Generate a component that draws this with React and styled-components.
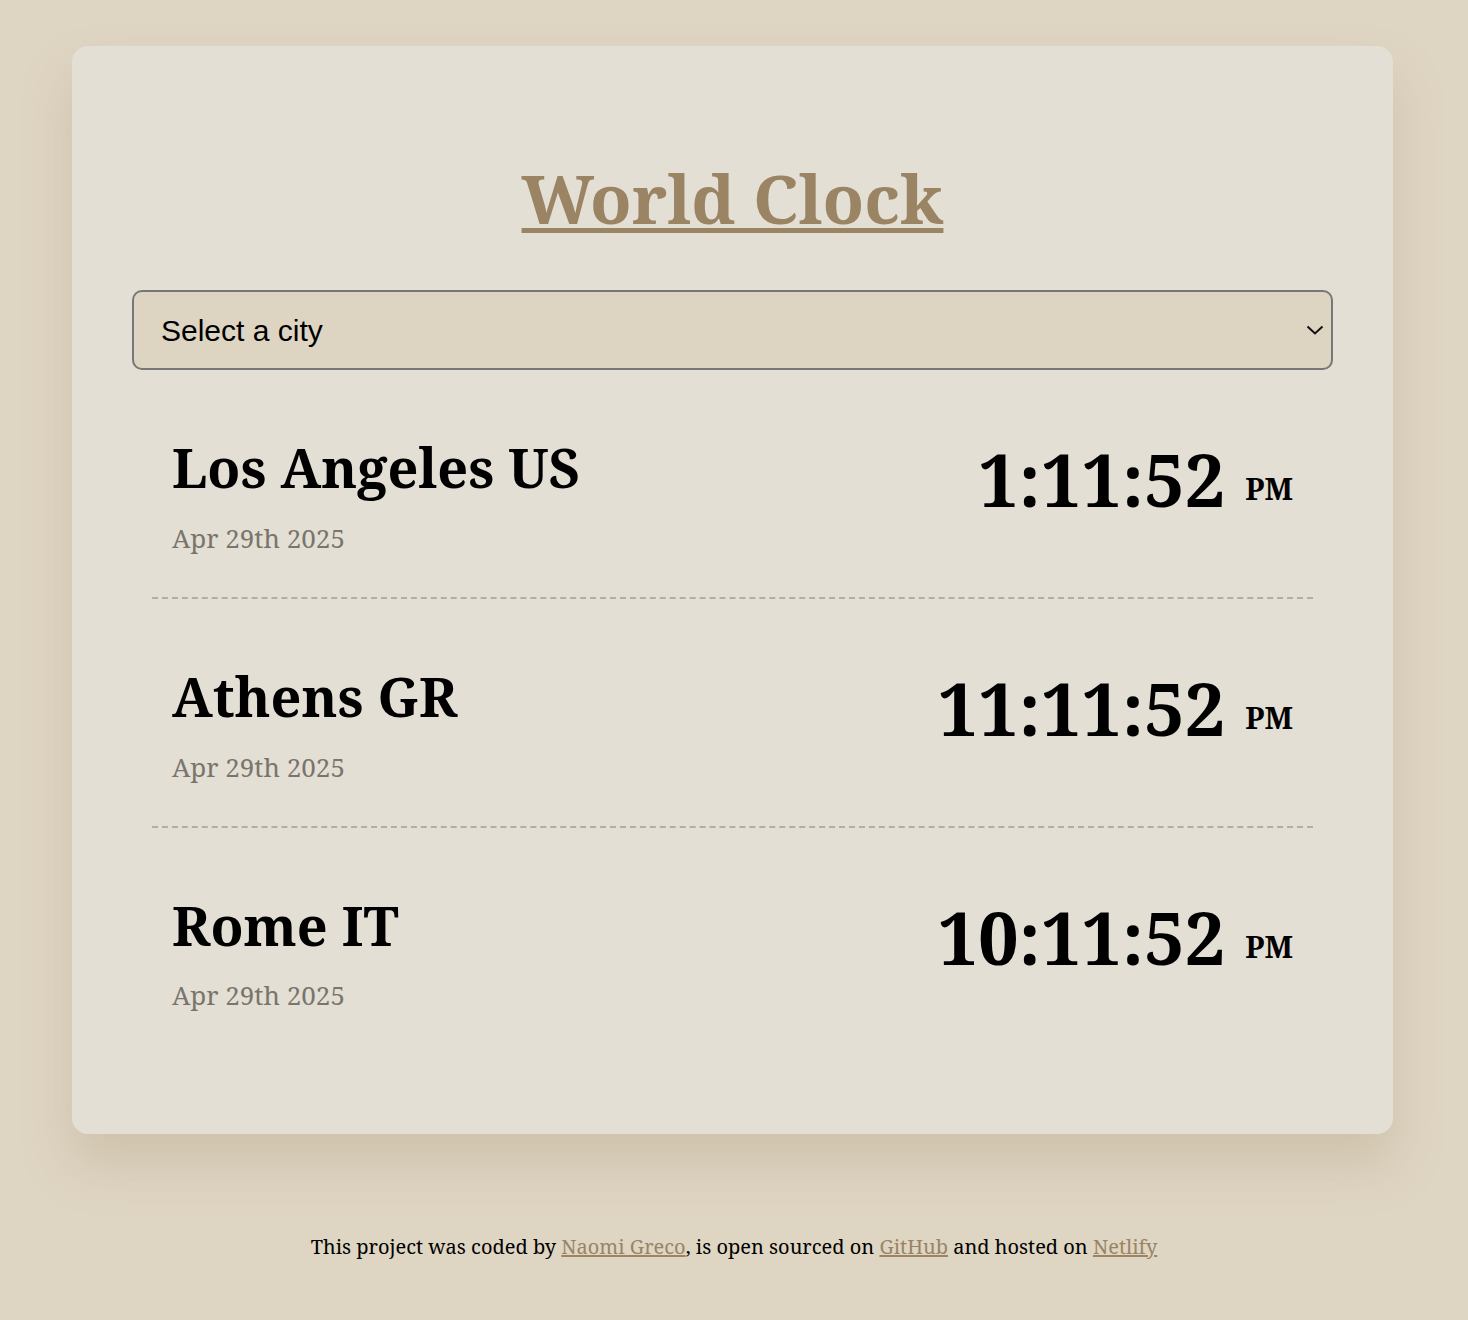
import React from 'react';
import styled, { createGlobalStyle } from 'styled-components';

const cities = [
  { name: 'Los Angeles US', date: 'Apr 29th 2025', time: '1:11:52', ampm: 'PM' },
  { name: 'Athens GR', date: 'Apr 29th 2025', time: '11:11:52', ampm: 'PM' },
  { name: 'Rome IT', date: 'Apr 29th 2025', time: '10:11:52', ampm: 'PM' },
];

export default function App() {
  return (
    <>
      <GlobalStyle />
      <Card>
        <Title>
          <a href="#">World Clock</a>
        </Title>
        <SelectWrap>
          <CitySelect defaultValue="">
            <option value="">Select a city</option>
            <option value="current">My current location</option>
            <option value="Europe/London">London</option>
            <option value="Asia/Tokyo">Tokyo</option>
          </CitySelect>
          <Chevron width="18" height="10" viewBox="0 0 18 10">
            <polyline points="1.5,1.5 9,8.5 16.5,1.5" />
          </Chevron>
        </SelectWrap>
        <CityList>
          {cities.map(city => (
            <CityRow key={city.name}>
              <div>
                <CityName>{city.name}</CityName>
                <CityDate>{city.date}</CityDate>
              </div>
              <Time>
                {city.time}
                <AmPm>{city.ampm}</AmPm>
              </Time>
            </CityRow>
          ))}
        </CityList>
      </Card>
      <Footer>
        This project was coded by <a href="#">Naomi Greco</a>, is open sourced on{' '}
        <a href="#">GitHub</a> and hosted on <a href="#">Netlify</a>
      </Footer>
    </>
  );
}

const GlobalStyle = createGlobalStyle`
  body {
    margin: 0;
    background: #dfd5c3;
    font-family: "Noto Serif", "DejaVu Serif", serif;
    color: #000;
  }
`;

const Card = styled.div`
  margin: 46px 75px 0 72px;
  box-sizing: border-box;
  padding: 105px 60px 80px;
  background: #e4dfd5;
  border-radius: 16px;
  box-shadow: 0 30px 50px rgba(160, 140, 105, 0.25);
`;

const Title = styled.h1`
  margin: 0 0 46px;
  text-align: center;
  font-size: 68px;
  font-weight: 700;

  a {
    color: #9a8464;
    text-decoration: underline;
    text-decoration-thickness: 5px;
    text-underline-offset: 4px;
  }
`;

const SelectWrap = styled.div`
  position: relative;
`;

const CitySelect = styled.select`
  display: block;
  width: 100%;
  height: 80px;
  padding: 0 50px 0 27px;
  background: #ddd4c2;
  border: 2px solid #777;
  border-radius: 10px;
  appearance: none;
  font-family: "Liberation Sans", Arial, sans-serif;
  font-size: 30px;
  color: #000;
`;

const Chevron = styled.svg`
  position: absolute;
  right: 9px;
  top: 35px;
  pointer-events: none;
  fill: none;
  stroke: #111;
  stroke-width: 2;
`;

const CityList = styled.div`
  margin: 0 20px;
`;

const CityRow = styled.div`
  display: flex;
  justify-content: space-between;
  align-items: flex-start;
  padding: 65px 20px 41px;
  border-bottom: 2px dashed #b3ada3;

  &:last-child {
    border-bottom: none;
  }
`;

const CityName = styled.div`
  font-size: 54px;
  font-weight: 700;
  line-height: 1.2;
`;

const CityDate = styled.div`
  margin-top: 20px;
  font-size: 26px;
  color: #7a756c;
`;

const Time = styled.div`
  margin-top: 8px;
  font-size: 72px;
  font-weight: 700;
  line-height: 1;
`;

const AmPm = styled.small`
  margin-left: 20px;
  font-size: 30px;
  vertical-align: 7px;
`;

const Footer = styled.footer`
  margin: 99px 0 50px;
  text-align: center;
  font-size: 20px;

  a {
    color: #9a8464;
  }
`;
